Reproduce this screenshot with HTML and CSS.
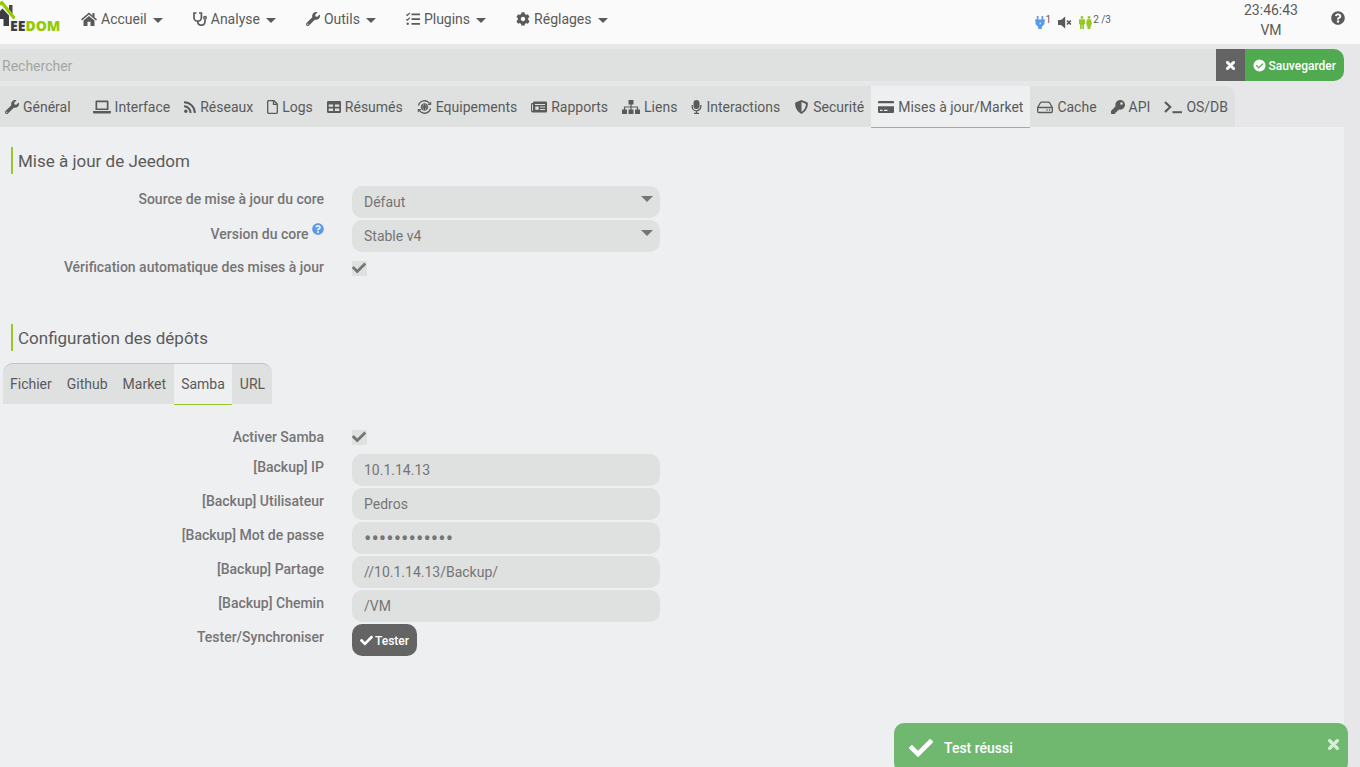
FILE: index.html
```html
<!DOCTYPE html>
<html lang="fr">
<head>
<meta charset="utf-8">
<title>Jeedom - Configuration</title>
<link rel="stylesheet" href="styles.css">
</head>
<body>
<svg class="sprite" aria-hidden="true">
  <symbol id="home" viewBox="0 0 16 14"><path d="M8 .5 0 7.300l1 1.200 7-6 7 6 1-1.200-2.500-2.100V1h-2v2.500zM8 3.900 2.500 8.600V14h4V9.800h3V14h4V8.600z"/></symbol>
  <symbol id="steth" viewBox="0 0 14 14"><path d="M3.500 1H1v4.500a3.700 3.700 0 0 0 7.400 0V1H6M4.700 9.200c0 5.500 7.300 5 7.300.6V7.500" fill="none" stroke="currentColor" stroke-width="1.700"/><circle cx="12" cy="5.800" r="1.300" fill="none" stroke="currentColor" stroke-width="1.400"/></symbol>
  <symbol id="wrench" viewBox="0 0 512 512"><path d="M507.730 109.100c-2.240-9.030-13.540-12.090-20.120-5.510l-74.360 74.360-67.880-11.310-11.310-67.880 74.360-74.360c6.620-6.620 3.430-17.900-5.660-20.160-47.380-11.740-99.550.91-136.580 37.930-39.640 39.640-50.550 97.100-34.050 147.200L18.740 402.760c-24.990 24.990-24.990 65.510 0 90.500 24.990 24.990 65.510 24.990 90.500 0l213.210-213.210c50.120 16.710 107.470 5.680 147.370-34.220 37.070-37.070 49.700-89.320 37.910-136.730zM64 472c-13.250 0-24-10.750-24-24 0-13.260 10.750-24 24-24s24 10.740 24 24c0 13.250-10.750 24-24 24z"/></symbol>
  <symbol id="tasks" viewBox="0 0 14 14"><path d="M5.500 1.500H14v1.700H5.500zM5.500 6.200H14v1.700H5.500zM5.500 11H14v1.700H5.500z"/><circle cx="1.700" cy="11.800" r="1.200"/><path d="m.3 2.400 1.100 1.100L3.800.9M.3 7.100l1.100 1.100 2.400-2.600" fill="none" stroke="currentColor" stroke-width="1.200"/></symbol>
  <symbol id="cog" viewBox="0 0 512 512"><path d="M487.400 315.700l-42.600-24.600c4.300-23.200 4.300-47 0-70.200l42.600-24.600c4.900-2.800 7.100-8.600 5.500-14-11.100-35.600-30-67.800-54.700-94.600-3.800-4.100-10-5.100-14.800-2.300L380.800 110c-17.900-15.400-38.500-27.300-60.800-35.100V25.800c0-5.600-3.900-10.500-9.400-11.700-36.700-8.200-74.300-7.800-109.200 0-5.500 1.200-9.400 6.100-9.400 11.700V75c-22.200 7.900-42.800 19.800-60.800 35.100L88.700 85.500c-4.900-2.800-11-1.900-14.800 2.300-24.700 26.700-43.600 58.900-54.700 94.600-1.700 5.400.6 11.200 5.500 14L67.300 221c-4.300 23.200-4.300 47 0 70.200l-42.600 24.600c-4.900 2.800-7.100 8.600-5.500 14 11.100 35.600 30 67.800 54.700 94.600 3.800 4.100 10 5.100 14.800 2.300l42.600-24.600c17.900 15.400 38.500 27.300 60.800 35.100v49.200c0 5.600 3.900 10.500 9.400 11.700 36.700 8.200 74.300 7.800 109.200 0 5.500-1.200 9.400-6.100 9.400-11.700v-49.200c22.200-7.900 42.800-19.800 60.800-35.100l42.600 24.600c4.900 2.800 11 1.900 14.800-2.300 24.700-26.700 43.600-58.900 54.700-94.600 1.500-5.500-.7-11.300-5.600-14.100zM256 336c-44.100 0-80-35.900-80-80s35.900-80 80-80 80 35.900 80 80-35.900 80-80 80z"/></symbol>
  <symbol id="help" viewBox="0 0 512 512"><path d="M504 256c0 136.997-111.043 248-248 248S8 392.997 8 256C8 119.083 119.043 8 256 8s248 111.083 248 248zM262.655 90c-54.497 0-89.255 22.957-116.549 63.758-3.536 5.286-2.353 12.415 2.715 16.258l34.699 26.310c5.205 3.947 12.621 3.008 16.665-2.122 17.864-22.658 30.113-35.797 57.303-35.797 20.429 0 45.698 13.148 45.698 32.958 0 14.976-12.363 22.667-32.534 33.976C247.128 238.528 216 254.941 216 296v4c0 6.627 5.373 12 12 12h56c6.627 0 12-5.373 12-12v-1.333c0-28.462 83.186-29.647 83.186-106.667 0-58.002-60.165-102-116.531-102zM256 338c-25.365 0-46 20.635-46 46 0 25.364 20.635 46 46 46s46-20.636 46-46c0-25.365-20.635-46-46-46z"/></symbol>
  <symbol id="times" viewBox="0 80 352 352"><path d="M242.720 256l100.070-100.070c12.280-12.280 12.280-32.190 0-44.480l-22.240-22.240c-12.280-12.280-32.190-12.280-44.480 0L176 189.280 75.930 89.210c-12.280-12.280-32.190-12.280-44.480 0L9.210 111.450c-12.280 12.280-12.280 32.190 0 44.480L109.280 256 9.210 356.070c-12.280 12.280-12.280 32.190 0 44.480l22.240 22.240c12.280 12.280 32.200 12.280 44.480 0L176 322.720l100.070 100.070c12.280 12.280 32.200 12.280 44.480 0l22.240-22.240c12.280-12.280 12.280-32.190 0-44.480L242.720 256z" stroke="currentColor" stroke-width="24"/></symbol>
  <symbol id="check" viewBox="0 0 512 512"><path d="M173.898 439.404l-166.400-166.400c-9.997-9.997-9.997-26.206 0-36.204l36.203-36.204c9.997-9.998 26.207-9.998 36.204 0L192 312.690 432.095 72.596c9.997-9.997 26.207-9.997 36.204 0l36.203 36.204c9.997 9.997 9.997 26.206 0 36.204l-294.400 294.401c-9.998 9.997-26.207 9.997-36.204-.001z"/></symbol>
  <symbol id="check-circle" viewBox="0 0 14 14"><path fill-rule="evenodd" d="M7 .5a6.500 6.500 0 1 1 0 13 6.500 6.500 0 0 1 0-13zM6.200 10.500l5-5-1-1-4 4L4 6.300l-1 1z"/></symbol>
  <symbol id="laptop" viewBox="0 0 18 14"><path fill-rule="evenodd" d="M3.500.5h11a1 1 0 0 1 1 1V10h-13V1.500a1 1 0 0 1 1-1zM4.200 2.200v6.200h9.600V2.200zM0 11h18v1.200a1.300 1.300 0 0 1-1.300 1.300H1.300A1.300 1.300 0 0 1 0 12.200z"/></symbol>
  <symbol id="rss" viewBox="0 0 12 14"><circle cx="1.800" cy="11.200" r="1.700"/><path d="M0 6.300a6.600 6.600 0 0 1 6.600 6.600M0 2.200A10.700 10.700 0 0 1 10.800 13" fill="none" stroke="currentColor" stroke-width="2"/></symbol>
  <symbol id="file" viewBox="0 0 11 14"><path d="M.7 1.400V12.600a.7.7 0 0 0 .7.7h8.200a.7.7 0 0 0 .7-.7V4L7 .7H1.400a.7.700 0 0 0-.7.7zM6.500.7v3.700h3.700" fill="none" stroke="currentColor" stroke-width="1.300"/></symbol>
  <symbol id="table" viewBox="0 0 14 14"><path fill-rule="evenodd" d="M1.300 1h11.400A1.300 1.300 0 0 1 14 2.300v9.400a1.300 1.300 0 0 1-1.300 1.300H1.300A1.300 1.300 0 0 1 0 11.700V2.300A1.300 1.300 0 0 1 1.300 1zM1.700 4.500v2.200h4.400V4.500zM7.900 4.500v2.200h4.400V4.500zM1.700 8.600v2.500h4.400V8.600zM7.900 8.600v2.500h4.400V8.600z"/></symbol>
  <symbol id="sync" viewBox="0 0 14 14"><path d="M1 5.500A6.200 6.200 0 0 1 12 3.300M13 8.500a6.200 6.200 0 0 1-11 2.200" fill="none" stroke="currentColor" stroke-width="1.300"/><path d="M13.700 1.500V5H10zM.3 12.500V9H4z"/><circle cx="7" cy="7" r="3.300" fill="none" stroke="currentColor"/><path d="M3.700 7h6.600M7 3.700v6.600M5 4.600q1.700 2.400 0 4.800M9 4.600q-1.700 2.400 0 4.800" fill="none" stroke="currentColor" stroke-width="1.100"/></symbol>
  <symbol id="news" viewBox="0 0 16 14"><path fill-rule="evenodd" d="M3 1.500h12a1 1 0 0 1 1 1v9a1 1 0 0 1-1 1H1.800A1.800 1.800 0 0 1 0 10.700V4a1 1 0 0 1 1-1h1v-.5a1 1 0 0 1 1-1zM1.100 4.300v6.200a.5.500 0 0 0 .9 0V4.300zM4 4v1h10V4zM4.300 6.500v3.300h3.400V6.500zM9 6.500v1h5v-1zM9 9v1h5V9z"/></symbol>
  <symbol id="sitemap" viewBox="0 0 18 14"><path d="M6.500 0h5v4.500h-5zM0 9.500h5V14H0zM6.500 9.500h5V14h-5zM13 9.500h5V14h-5z"/><path d="M9 4v6M2.500 10V7h13v3" fill="none" stroke="currentColor" stroke-width="1.200"/></symbol>
  <symbol id="mic" viewBox="0 0 10 14"><rect x="2" width="6" height="9" rx="3"/><path d="M.7 5v1.500a4.300 4.300 0 0 0 8.600 0V5M5 10.500V13M2.500 13.300h5" fill="none" stroke="currentColor" stroke-width="1.300"/></symbol>
  <symbol id="shield" viewBox="0 0 14 14"><path fill-rule="evenodd" d="m7 0 5.600 2.200c.5.200.8.600.8 1.100C13.400 8 11 12 7 14 3 12 .6 8 .6 3.300c0-.5.300-.9.800-1.100zM7 2v9.900c2.500-1.500 4.300-4.500 4.500-8z"/></symbol>
  <symbol id="card" viewBox="0 0 16 14"><path fill-rule="evenodd" d="M1 1h14a1 1 0 0 1 1 1v1.300H0V2a1 1 0 0 1 1-1zM0 6.300h16V12a1 1 0 0 1-1 1H1a1 1 0 0 1-1-1zM2 9.700v1.300h2.500V9.700zM6 9.700v1.300h3.500V9.700z"/></symbol>
  <symbol id="hdd" viewBox="0 0 16 14"><path d="M.7 7.500h14.600v4a1 1 0 0 1-1 1H1.700a1 1 0 0 1-1-1zL3.400 2.800a1.500 1.500 0 0 1 1.200-.7h6.800a1.500 1.500 0 0 1 1.200.7l2.700 4.700" fill="none" stroke="currentColor" stroke-width="1.300"/><circle cx="10" cy="10" r=".8"/><circle cx="12.600" cy="10" r=".8"/></symbol>
  <symbol id="key" viewBox="0 0 512 512"><path d="M512 176.001C512 273.203 433.202 352 336 352c-11.220 0-22.190-1.062-32.827-3.069l-24.012 27.014A23.999 23.999 0 0 1 261.223 384H224v40c0 13.255-10.745 24-24 24h-40v40c0 13.255-10.745 24-24 24H24c-13.255 0-24-10.745-24-24v-78.059c0-6.365 2.529-12.470 7.029-16.971l161.802-161.802C163.108 213.814 160 195.271 160 176 160 78.798 238.797.001 335.999 0 433.488-.001 512 78.511 512 176.001zM336 128c0 26.510 21.490 48 48 48s48-21.490 48-48-21.490-48-48-48-48 21.490-48 48z"/></symbol>
  <symbol id="terminal" viewBox="0 0 18 14"><path d="m1 2 5.200 5L1 12" fill="none" stroke="currentColor" stroke-width="2.200"/><path d="M8.500 11.200H18v2H8.500z"/></symbol>
  <symbol id="plug" viewBox="0 0 10 13"><path fill-rule="evenodd" d="M1.800 0h1.700v3.500h3V0h1.700v3.500H10v1.600h-.5V8L6.800 11v2H3.200v-2L.5 8V5.100H0V3.500h1.800zM5.400 5.800 4.200 7.600h.9L4.700 9l1.500-2.100h-.9z"/></symbol>
  <symbol id="mute" viewBox="0 0 14 12"><path d="M0 3.500h3L7.200 0v12L3 8.500H0z"/><path d="m9 4 3.800 4M12.800 4 9 8" fill="none" stroke="currentColor" stroke-width="1.700"/></symbol>
  <symbol id="people" viewBox="0 0 13 13"><circle cx="3" cy="1.400" r="1.400"/><circle cx="10" cy="1.400" r="1.400"/><path d="M0 3.200h6v5H5V13H3.300V9h-.6v4H1V8.200H0zM8 3.200h4l1 5-1 .5.500 1.800H11.500V13h-3v-2.500H7.500L8 8.700l-1-.5z"/></symbol>
</svg>

<header class="topbar">
  <a class="logo" href="#" aria-label="Jeedom">
    <svg class="logo-house" viewBox="0 0 15 30"><path d="M9 5h3.500v12L9 13z" fill="#4a4a4c"/><path d="M0 11l2.500-2.500L9 15.500V26H3.500v-7H0z" fill="#3e3e42"/><path d="M-1 4.500 2 2.800 14.500 18.500" fill="none" stroke="#94ca02" stroke-width="3.200"/></svg>
    <span class="logo-text">EE<b>DOM</b></span>
  </a>
  <nav class="menu">
    <a href="#"><svg class="w16"><use href="#home"/></svg>Accueil<i class="caret"></i></a>
    <a href="#"><svg class="w14"><use href="#steth"/></svg>Analyse<i class="caret"></i></a>
    <a href="#"><svg class="w14"><use href="#wrench"/></svg>Outils<i class="caret"></i></a>
    <a href="#"><svg class="w14"><use href="#tasks"/></svg>Plugins<i class="caret"></i></a>
    <a href="#"><svg class="w14"><use href="#cog"/></svg>Réglages<i class="caret"></i></a>
  </nav>
  <div class="status">
    <span class="stat"><svg class="s-plug"><use href="#plug"/></svg><span>1</span></span>
    <span class="stat"><svg class="s-mute"><use href="#mute"/></svg></span>
    <span class="stat"><svg class="s-people"><use href="#people"/></svg><span>2 /3</span></span>
  </div>
  <div class="clock"><span>23:46:43</span><span>VM</span></div>
  <a class="help" href="#" aria-label="Aide"><svg class="w14"><use href="#help"/></svg></a>
</header>

<main class="page">
  <div class="searchbar">
    <input type="text" placeholder="Rechercher" aria-label="Rechercher">
    <button class="reset" aria-label="Effacer"><svg><use href="#times"/></svg></button>
    <button class="save"><svg><use href="#check-circle"/></svg>Sauvegarder</button>
  </div>

  <nav class="tabs main-tabs">
    <a href="#"><svg class="w14"><use href="#wrench"/></svg>Général</a>
    <a href="#"><svg class="w18"><use href="#laptop"/></svg>Interface</a>
    <a href="#"><svg class="w12"><use href="#rss"/></svg>Réseaux</a>
    <a href="#"><svg class="w11"><use href="#file"/></svg>Logs</a>
    <a href="#"><svg class="w14"><use href="#table"/></svg>Résumés</a>
    <a href="#"><svg class="w15"><use href="#sync"/></svg>Equipements</a>
    <a href="#"><svg class="w16"><use href="#news"/></svg>Rapports</a>
    <a href="#"><svg class="w18"><use href="#sitemap"/></svg>Liens</a>
    <a href="#"><svg class="w11"><use href="#mic"/></svg>Interactions</a>
    <a href="#"><svg class="w15"><use href="#shield"/></svg>Securité</a>
    <a href="#" class="active" aria-current="page"><svg class="w16"><use href="#card"/></svg>Mises à jour/Market</a>
    <a href="#"><svg class="w16"><use href="#hdd"/></svg>Cache</a>
    <a href="#"><svg class="w14"><use href="#key"/></svg>API</a>
    <a href="#"><svg class="w18"><use href="#terminal"/></svg>OS/DB</a>
  </nav>

  <form class="panel">
    <section class="core">
      <h2>Mise à jour de Jeedom</h2>
      <div class="row"><label for="source">Source de mise à jour du core</label><span class="select"><select id="source"><option>Défaut</option></select></span></div>
      <div class="row"><label for="version">Version du core <svg class="info"><use href="#help"/></svg></label><span class="select"><select id="version"><option>Stable v4</option></select></span></div>
      <div class="row"><label for="auto">Vérification automatique des mises à jour</label><span class="tick"><input type="checkbox" id="auto" checked><svg><use href="#check"/></svg></span></div>
    </section>

    <section>
      <h2>Configuration des dépôts</h2>
      <nav class="tabs repo-tabs">
        <a href="#">Fichier</a>
        <a href="#">Github</a>
        <a href="#">Market</a>
        <a href="#" class="active" aria-current="page">Samba</a>
        <a href="#">URL</a>
      </nav>
      <div class="row short"><label for="samba">Activer Samba</label><span class="tick"><input type="checkbox" id="samba" checked><svg><use href="#check"/></svg></span></div>
      <div class="row"><label for="ip">[Backup] IP</label><input class="field" type="text" id="ip" value="10.1.14.13"></div>
      <div class="row"><label for="user">[Backup] Utilisateur</label><input class="field" type="text" id="user" value="Pedros"></div>
      <div class="row"><label for="pass">[Backup] Mot de passe</label><input class="field secret" type="password" id="pass" value="abcdefghijkl"></div>
      <div class="row"><label for="share">[Backup] Partage</label><input class="field" type="text" id="share" value="//10.1.14.13/Backup/"></div>
      <div class="row"><label for="path">[Backup] Chemin</label><input class="field" type="text" id="path" value="/VM"></div>
      <div class="row"><label for="test">Tester/Synchroniser</label><button class="test" type="button" id="test"><svg><use href="#check"/></svg>Tester</button></div>
    </section>
  </form>
</main>

<div class="toast" role="status">
  <svg class="toast-check"><use href="#check"/></svg>
  <span>Test réussi</span>
  <button aria-label="Fermer"><svg><use href="#times"/></svg></button>
</div>
</body>
</html>
```

FILE: styles.css
```css
* { box-sizing: border-box; }

body {
  margin: 0;
  min-height: 100vh;
  display: flex;
  flex-direction: column;
  overflow: hidden;
  background: #e7e7e9;
  color: #5a5a5a;
  font: 14px/20px Roboto, "Liberation Sans", sans-serif;
}

a { color: inherit; text-decoration: none; }
button, input, select { font: inherit; color: inherit; border: 0; margin: 0; }
button { display: flex; align-items: center; justify-content: center; }
svg { fill: currentColor; flex: none; width: 14px; height: 14px; }
.sprite { position: absolute; width: 0; height: 0; }

.w11 { width: 11px; }
.w12 { width: 12px; }
.w14 { width: 14px; }
.w15 { width: 15px; }
.w16 { width: 16px; }
.w18 { width: 18px; }

/* Top bar */
.topbar {
  display: flex;
  align-items: flex-start;
  height: 44px;
  padding-right: 15px;
  background: #fafafa;
}
.logo { display: flex; align-items: flex-end; width: 81px; height: 34px; }
.logo-house { width: 15px; height: 30px; margin: 0 -5px 4px 0; }
.logo-text { font: 800 14px/16px "Open Sans", sans-serif; color: #3e3e42; }
.logo-text b { color: #94ca02; font-weight: 800; }
.menu { display: flex; gap: 30px; padding-top: 9px; }
.menu a { display: flex; align-items: center; gap: 4px; }
.caret {
  margin: 2px 0 0 2px;
  border: 5px solid transparent;
  border-top-color: currentColor;
  border-bottom: 0;
}
.status {
  display: flex;
  gap: 7px;
  margin-left: auto;
  padding-top: 12px;
  font-size: 10px;
  line-height: 16px;
}
.stat { display: flex; gap: 1px; }
.stat svg { margin-top: 4px; height: 13px; }
.stat .s-plug { width: 10px; color: #5a9ae6; }
.stat .s-mute { width: 14px; }
.stat .s-people { width: 13px; color: #96c927; }
.clock {
  display: flex;
  flex-direction: column;
  align-items: center;
  width: 120px;
  margin-left: 100px;
}
.help { padding-top: 11px; }
.help svg { display: block; }

/* Search bar */
.page { flex: 1; display: flex; flex-direction: column; margin-right: 16px; padding-top: 5px; }
.searchbar { display: flex; height: 32px; margin-bottom: 5px; }
.searchbar input { flex: 1; min-width: 0; padding: 1px 2px 0; background: #dfe1e0; outline: 0; }
.searchbar input::placeholder { color: #a3a5a4; opacity: 1; }
.searchbar button { color: #fff; }
.reset { width: 29px; padding: 0; background: #646464; }
.reset svg { width: 9px; height: 9px; }
.save { gap: 2px; padding: 1px 8px 0; border-radius: 0 10px 10px 0; background: #50aa50; font-size: 12px; font-weight: 500; }
.save svg { width: 13px; height: 13px; }

/* Tabs */
.tabs { display: flex; align-self: flex-start; background: #dfe1e0; }
.tabs a {
  display: flex;
  align-items: center;
  gap: 4px;
  padding: 0 7px;
  height: 41px;
  white-space: nowrap;
}
.tabs .active { background: #eeeff1; height: 42px; border-bottom: 1px solid #96c927; }
.main-tabs { height: 41px; border-radius: 0 10px 0 0; position: relative; }
.main-tabs a:first-child { padding: 0 15px 0 5px; }
.repo-tabs {
  width: max-content;
  gap: 1px;
  height: 41px;
  margin: 12px 0 20px 3px;
  border-top: 1px solid #c3c5c4;
  border-radius: 10px 10px 0 0;
}
.repo-tabs a { height: 40px; }
.repo-tabs .active { height: 41px; }

/* Settings panel */
.panel { flex: 1; padding-top: 20px; background: #eeeff1; }
.core { margin-bottom: 36px; }
h2 {
  margin: 0 11px 12px;
  padding: 1px 0 0 5px;
  border-left: 2px solid #96c927;
  font-size: 17px;
  font-weight: 400;
  line-height: 26px;
}
.row {
  display: grid;
  grid-template-columns: 324fr 308fr 656fr;
  column-gap: 28px;
  align-items: start;
  min-height: 34px;
  color: #757575;
}
.short { min-height: 30px; }
.row label { padding-top: 3px; text-align: right; font-weight: 500; }
.info { width: 12px; height: 12px; color: #5a9ae6; vertical-align: 4px; }
.field, .select select {
  width: 100%;
  height: 32px;
  padding: 0 12px;
  border-radius: 10px;
  background: #dfe1e0;
  outline: 0;
}
.secret { font-size: 22px; }
.select { position: relative; }
.select select { display: block; appearance: none; }
.select::after {
  content: "";
  position: absolute;
  right: 7px;
  top: 10px;
  border: 6px solid transparent;
  border-top-color: currentColor;
  border-bottom: 0;
  pointer-events: none;
}
.tick { position: relative; width: 15px; height: 15px; margin-top: 7px; }
.short .tick { margin-top: 6px; }
.tick input { display: block; appearance: none; width: 15px; height: 15px; background: #dfe1e0; }
.tick svg { position: absolute; inset: 0; pointer-events: none; }
.test {
  justify-self: start;
  gap: 2px;
  height: 32px;
  padding: 1px 8px 0;
  border-radius: 10px;
  background: #646464;
  color: #fff;
  font-size: 12px;
  font-weight: 500;
}
.test svg { width: 13px; height: 13px; }

/* Notification */
.toast {
  position: fixed;
  right: 12px;
  bottom: -6px;
  display: flex;
  align-items: center;
  width: 454px;
  height: 50px;
  padding: 0 9px 0 15px;
  border-radius: 10px;
  background: #70b770;
  color: #fff;
  font-weight: 500;
}
.toast-check { width: 24px; height: 24px; margin-right: 11px; }
.toast button { margin: 0 0 8px auto; padding: 0; background: none; color: #d9ecd9; }
.toast button svg { width: 11px; height: 11px; }
```
